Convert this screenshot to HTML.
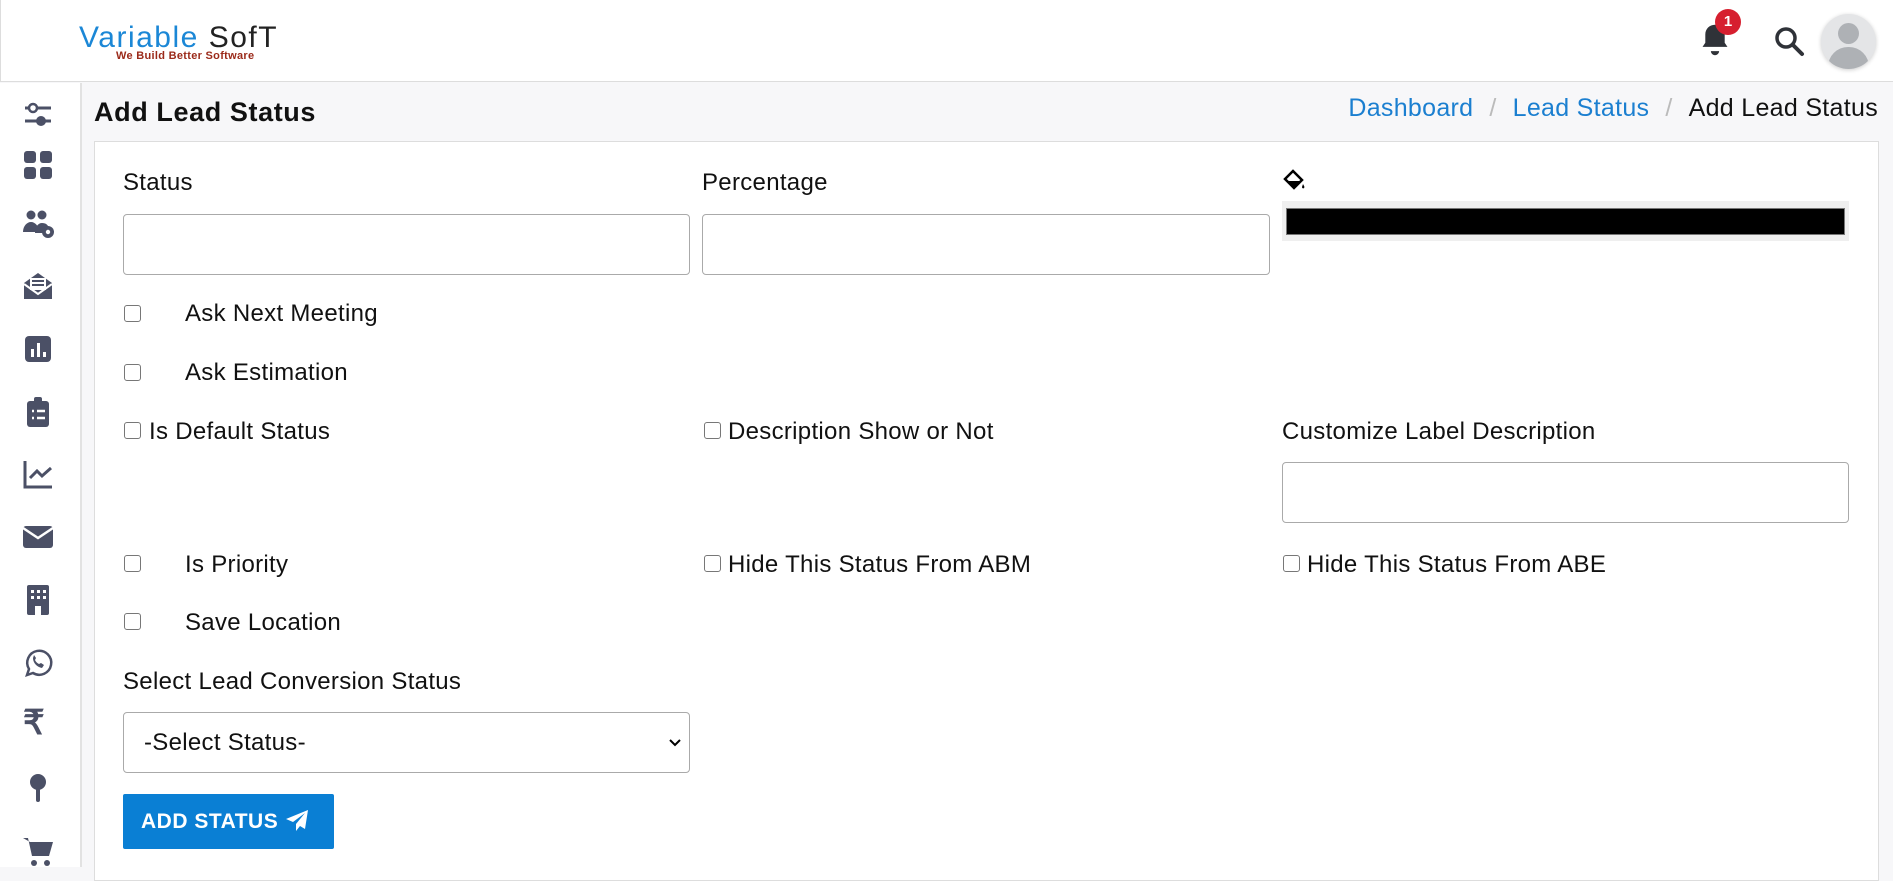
<!DOCTYPE html>
<html><head><meta charset="utf-8"><style>
*{box-sizing:border-box;margin:0;padding:0}
body{width:1893px;height:867px;overflow:hidden;background:#f7f7f9;font-family:"Liberation Sans",sans-serif;color:#111;position:relative}
.hdr{position:absolute;left:0;top:0;width:1893px;height:82px;background:#fff;border-bottom:1px solid #ddd;border-left:1px solid #ddd}
.side{position:absolute;left:0;top:83px;width:82px;height:784px;background:#fff;border-right:2px solid #e2e2e2}
.ic{position:absolute;left:22px;width:32px;height:32px}
.abs{position:absolute;white-space:nowrap}
.card{position:absolute;left:94px;top:141px;width:1785px;height:740px;background:#fff;border:1px solid #ddd}
.lbl{position:absolute;font-size:24px;letter-spacing:0.3px;color:#111;white-space:nowrap}
.inp{position:absolute;height:61px;border:1px solid #aaa;border-radius:4px;background:#fff}
.cb{position:absolute;width:17px;height:17px;border:1.5px solid #777;border-radius:3px;background:#fff}
</style></head><body>
<div class="hdr">
 <div class="abs" style="left:78px;top:21px;font-size:30px;letter-spacing:1.5px"><span style="color:#1b87d6">Variable</span> <span style="color:#222">SofT</span></div>
 <div class="abs" style="left:115px;top:50px;font-size:11px;font-weight:bold;color:#9b2a1a;letter-spacing:0.3px">We Build Better Software</div>
 <svg class="abs" style="left:1697px;top:22px" width="34" height="36" viewBox="0 0 24 26"><path d="M12 2c-4 0-7 3-7 7v6l-2 3h18l-2-3V9c0-4-3-7-7-7z M9 21h6a3 3 0 0 1-6 0z" fill="#2f3238"/></svg>
 <div class="abs" style="left:1714px;top:9px;width:26px;height:26px;border-radius:50%;background:#d61f2f;color:#fff;font-size:15px;font-weight:bold;text-align:center;line-height:26px">1</div>
 <svg class="abs" style="left:1772px;top:25px" width="32" height="32" viewBox="0 0 32 32"><circle cx="13" cy="13" r="9" fill="none" stroke="#2f3238" stroke-width="3.5"/><path d="M20 20l9 9" stroke="#2f3238" stroke-width="4" stroke-linecap="round"/></svg>
 <div class="abs" style="left:1820px;top:14px;width:55px;height:55px;border-radius:50%;background:#e4e5e7;overflow:hidden;box-shadow:0 1px 4px rgba(0,0,0,.2)">
  <div style="position:absolute;left:17px;top:9px;width:21px;height:21px;border-radius:50%;background:#aeb1b5"></div>
  <div style="position:absolute;left:7px;top:33px;width:41px;height:30px;border-radius:20px 20px 0 0;background:#aeb1b5"></div>
 </div>
</div>
<div class="side">
 <svg class="ic" style="top:16px" viewBox="0 0 32 32"><path d="M3 9h26M3 22h26" stroke="#4b5066" stroke-width="3"/><circle cx="11" cy="9" r="4" fill="#fff" stroke="#4b5066" stroke-width="2.5"/><circle cx="19" cy="22" r="5" fill="#4b5066"/></svg>
 <svg class="ic" style="top:66px" viewBox="0 0 32 32"><rect x="2" y="2" width="12" height="12" rx="3" fill="#4b5066"/><rect x="18" y="2" width="12" height="12" rx="3" fill="#4b5066"/><rect x="2" y="18" width="12" height="12" rx="3" fill="#4b5066"/><rect x="18" y="18" width="12" height="12" rx="3" fill="#4b5066"/></svg>
 <svg class="ic" style="top:124px" viewBox="0 0 32 32"><circle cx="9" cy="8" r="4.5" fill="#4b5066"/><circle cx="20" cy="8" r="4.5" fill="#4b5066"/><path d="M1 25c0-6 4-10 8-10s8 4 8 10z M13 26c0-6 3-10 7-10s6 2 7 5v5z" fill="#4b5066"/><circle cx="26" cy="25" r="6" fill="#4b5066"/><circle cx="26" cy="25" r="2.2" fill="#fff"/></svg>
 <svg class="ic" style="top:187px" viewBox="0 0 32 32"><path d="M2 13l14-10 14 10v16H2z" fill="#4b5066"/><rect x="8" y="8" width="16" height="12" fill="#fff"/><path d="M10 11h12M10 15h12" stroke="#4b5066" stroke-width="2"/><path d="M2 14l14 10 14-10" fill="none" stroke="#fff" stroke-width="2"/></svg>
 <svg class="ic" style="top:250px" viewBox="0 0 32 32"><rect x="3" y="3" width="26" height="26" rx="4" fill="#4b5066"/><rect x="9" y="16" width="3" height="8" fill="#fff"/><rect x="15" y="10" width="3" height="14" fill="#fff"/><rect x="21" y="19" width="3" height="5" fill="#fff"/></svg>
 <svg class="ic" style="top:313px" viewBox="0 0 32 32"><rect x="5" y="5" width="22" height="26" rx="3" fill="#4b5066"/><rect x="12" y="1" width="8" height="7" rx="2" fill="#4b5066"/><path d="M10 15h2M15 15h8M10 22h2M15 22h8" stroke="#fff" stroke-width="2.5"/></svg>
 <svg class="ic" style="top:375px" viewBox="0 0 32 32"><path d="M3 3v26h27" fill="none" stroke="#4b5066" stroke-width="3"/><path d="M8 20l7-7 5 5 9-8" fill="none" stroke="#4b5066" stroke-width="3"/></svg>
 <svg class="ic" style="top:438px" viewBox="0 0 32 32"><rect x="1" y="5" width="30" height="22" rx="3" fill="#4b5066"/><path d="M1 7l15 10 15-10" fill="none" stroke="#fff" stroke-width="2.5"/></svg>
 <svg class="ic" style="top:501px" viewBox="0 0 32 32"><rect x="5" y="1" width="22" height="30" rx="2" fill="#4b5066"/><g fill="#fff"><rect x="9" y="6" width="3" height="3"/><rect x="15" y="6" width="3" height="3"/><rect x="21" y="6" width="3" height="3"/><rect x="9" y="12" width="3" height="3"/><rect x="15" y="12" width="3" height="3"/><rect x="21" y="12" width="3" height="3"/><rect x="13" y="22" width="6" height="9"/></g></svg>
 <svg class="ic" style="top:564px" viewBox="0 0 32 32"><path d="M5 28l2-6a12 12 0 1 1 4 4z" fill="none" stroke="#4b5066" stroke-width="2.5"/><path d="M11 11c0 5 4 9 9 10l2-3-3-2-2 1c-2-1-3-2-4-4l1-2-2-3z" fill="#4b5066"/></svg>
 <div class="abs" style="left:23px;top:620px;font-size:34px;font-weight:bold;color:#4b5066">₹</div>
 <svg class="ic" style="top:689px" viewBox="0 0 32 32"><circle cx="16" cy="10" r="8" fill="#4b5066"/><rect x="14" y="16" width="4" height="14" rx="2" fill="#4b5066"/></svg>
 <svg class="ic" style="top:752px" viewBox="0 0 32 32"><path d="M1 3h5l4 18h17l4-14H8" fill="#4b5066"/><circle cx="12" cy="28" r="3" fill="#4b5066"/><circle cx="25" cy="28" r="3" fill="#4b5066"/></svg>
</div>
<div class="abs" style="left:94px;top:97px;font-size:27px;font-weight:bold;letter-spacing:0.6px">Add Lead Status</div>
<div class="abs" style="right:15px;top:94px;font-size:25px;letter-spacing:0.3px"><span style="color:#1b7fd0">Dashboard</span><span style="color:#bbb;padding:0 16px">/</span><span style="color:#1b7fd0">Lead Status</span><span style="color:#bbb;padding:0 16px">/</span>Add Lead Status</div>
<div class="card"></div>
<div class="lbl" style="left:123px;top:169px">Status</div>
<div class="lbl" style="left:702px;top:169px">Percentage</div>
<svg class="abs" style="left:1282px;top:169px" width="24" height="24" viewBox="0 0 24 24"><path d="M3 10l8-8 9 9-8 8z" fill="none" stroke="#000" stroke-width="2.5"/><path d="M5 12h13l-6 7z" fill="#000"/><path d="M21 15c1 2 2 3 1 4s-2 0-2-1z" fill="#000"/></svg>
<div class="inp" style="left:123px;top:214px;width:567px"></div>
<div class="inp" style="left:702px;top:214px;width:568px"></div>
<div class="abs" style="left:1282px;top:201px;width:567px;height:40px;background:#efefef"><div style="margin:7px 4px;height:27px;background:#000;border:1px solid #777"></div></div>
<div class="cb" style="left:124px;top:305px"></div><div class="lbl" style="left:185px;top:300px">Ask Next Meeting</div>
<div class="cb" style="left:124px;top:364px"></div><div class="lbl" style="left:185px;top:359px">Ask Estimation</div>
<div class="cb" style="left:124px;top:422px"></div><div class="lbl" style="left:149px;top:418px">Is Default Status</div>
<div class="cb" style="left:704px;top:422px"></div><div class="lbl" style="left:728px;top:418px">Description Show or Not</div>
<div class="lbl" style="left:1282px;top:418px">Customize Label Description</div>
<div class="inp" style="left:1282px;top:462px;width:567px"></div>
<div class="cb" style="left:124px;top:555px"></div><div class="lbl" style="left:185px;top:551px">Is Priority</div>
<div class="cb" style="left:704px;top:555px"></div><div class="lbl" style="left:728px;top:551px">Hide This Status From ABM</div>
<div class="cb" style="left:1283px;top:555px"></div><div class="lbl" style="left:1307px;top:551px">Hide This Status From ABE</div>
<div class="cb" style="left:124px;top:613px"></div><div class="lbl" style="left:185px;top:609px">Save Location</div>
<div class="lbl" style="left:123px;top:668px">Select Lead Conversion Status</div>
<div class="inp" style="left:123px;top:712px;width:567px"><div class="abs" style="left:20px;top:16px;font-size:24px;letter-spacing:0.3px">-Select Status-</div><svg class="abs" style="left:545px;top:25px" width="12" height="10" viewBox="0 0 12 10"><path d="M1 2l5 5 5-5" fill="none" stroke="#000" stroke-width="2"/></svg></div>
<div class="abs" style="left:123px;top:794px;width:211px;height:55px;background:#0a7fd4;border-radius:2px;color:#fff;font-size:21px;font-weight:bold;letter-spacing:0.5px;line-height:55px;padding-left:18px">ADD STATUS <svg style="vertical-align:-3px" width="24" height="22" viewBox="0 0 24 22"><path d="M23 1L1 10l7 3 12-9-9 11v7l4-5 5 3z" fill="#fff"/></svg></div>
</body></html>
